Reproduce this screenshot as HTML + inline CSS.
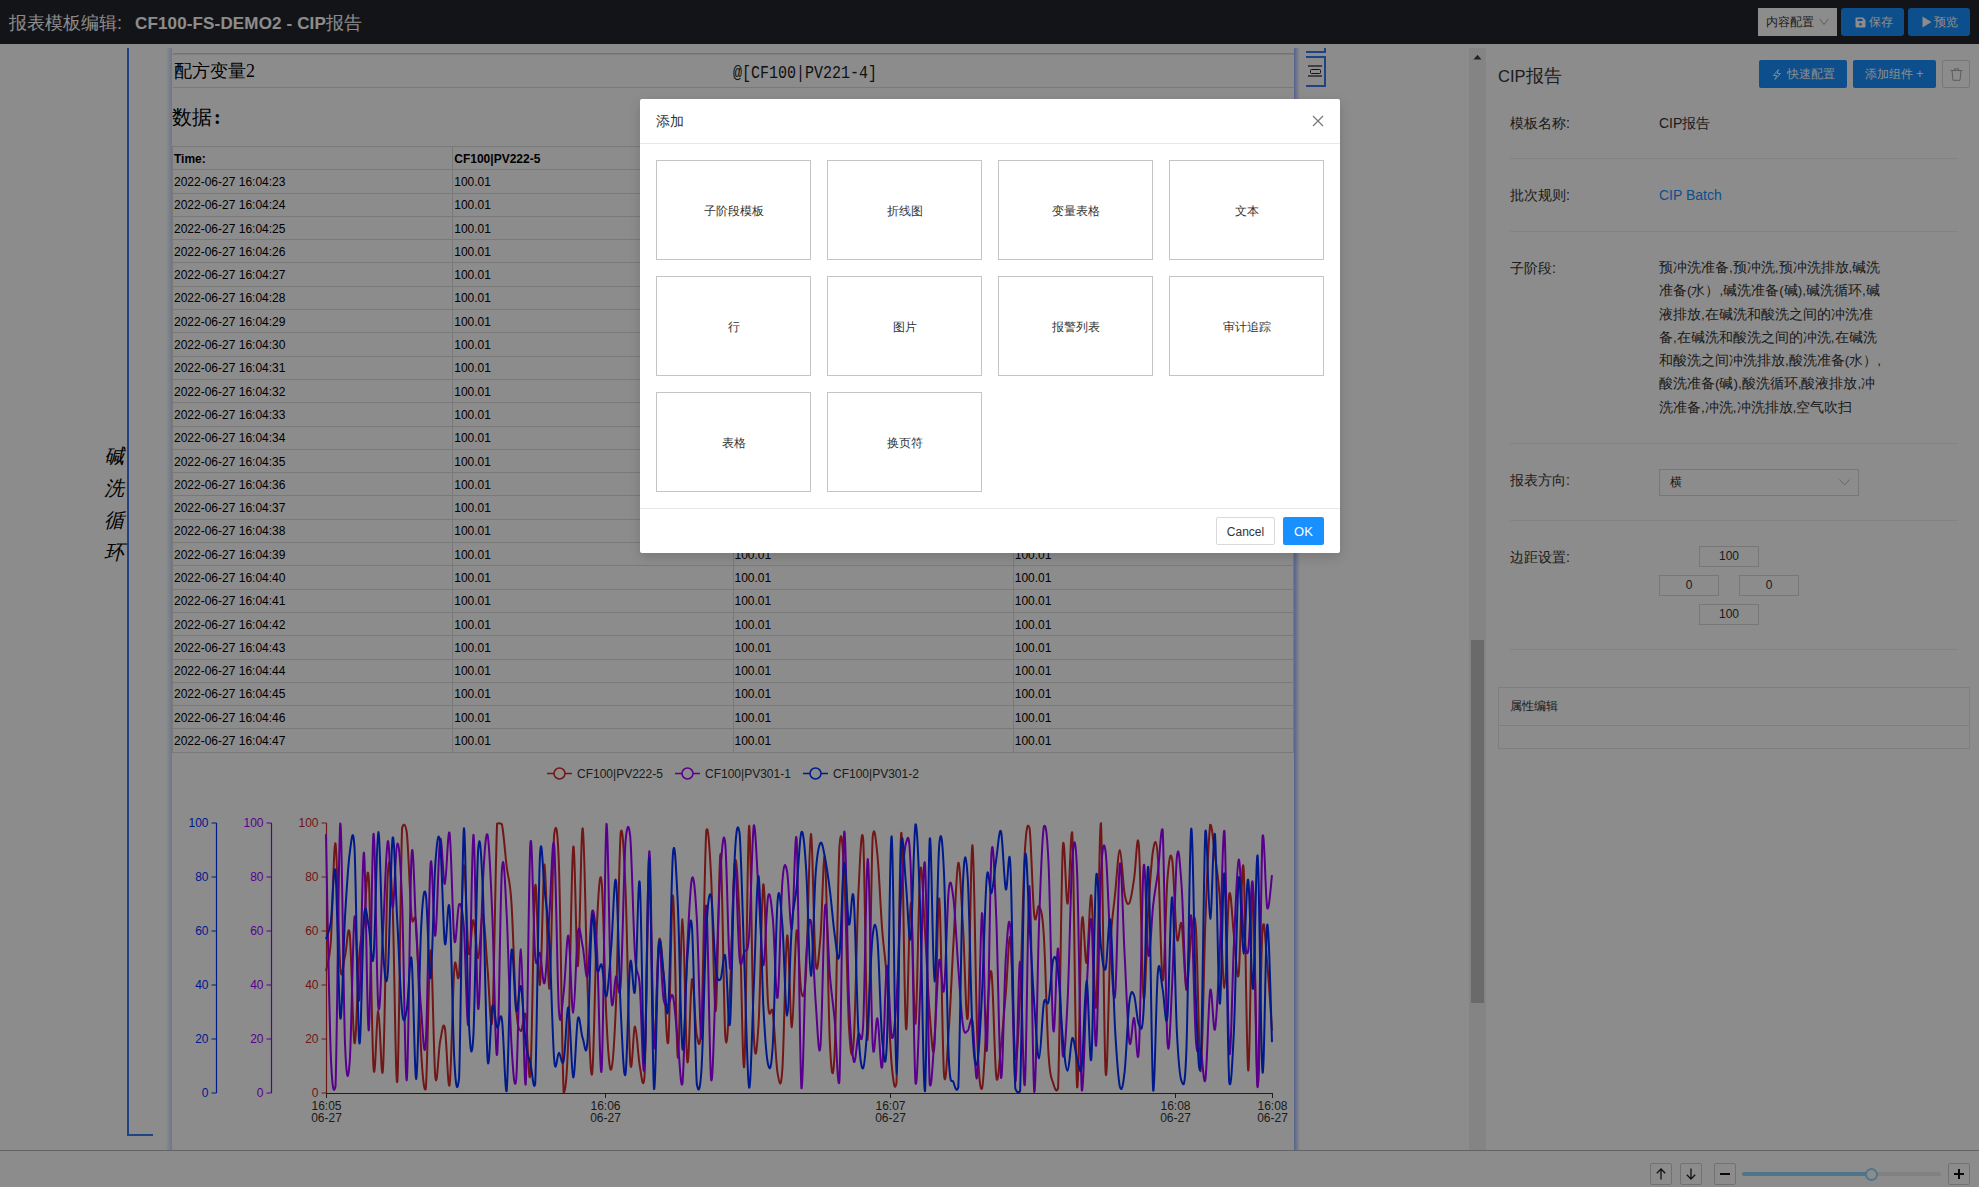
<!DOCTYPE html>
<html><head><meta charset="utf-8"><style>
*{box-sizing:border-box;margin:0;padding:0}
html,body{width:1979px;height:1187px;overflow:hidden;background:#fff;font-family:"Liberation Sans",sans-serif;color:#333;position:relative}
.abs{position:absolute}
#hdr{position:absolute;left:0;top:0;width:1979px;height:44px;background:#23252c}
#title{position:absolute;left:9px;top:11px;font-size:18px;color:#fff;white-space:nowrap;line-height:24px}
.hbtn{position:absolute;top:8px;height:28px;font-size:13px;line-height:28px;white-space:nowrap}
#vscroll{position:absolute;left:1469px;top:48px;width:17px;height:1102px;background:#f1f1f1}
#thumb{position:absolute;left:2px;top:592px;width:13px;height:363px;background:#c1c1c1}
#bot{position:absolute;left:0;top:1150px;width:1979px;height:37px;background:#fff;border-top:1px solid #b4b4b4}
#mask{position:absolute;left:0;top:0;width:1979px;height:1187px;background:rgba(0,0,0,0.45)}
#modal{position:absolute;left:640px;top:99px;width:700px;height:454px;background:#fff;border-radius:2px;box-shadow:0 4px 12px rgba(0,0,0,0.15)}
table.dt{position:absolute;left:172px;top:146px;width:1122px;border-collapse:collapse;table-layout:fixed;font-size:12px;color:#000}
table.dt td{border:1px solid #dcdcdc;height:23.3px;padding:1px 1px 0 1px;white-space:nowrap;line-height:20px}
.serif{font-family:"Liberation Serif",serif}
.lbl{position:absolute;left:1510px;font-size:14px;color:#333;line-height:20px}
.val{position:absolute;left:1659px;font-size:14px;color:#333;line-height:20px}
.hr{position:absolute;left:1510px;width:448px;height:1px;background:#eeeeee}
.inp{position:absolute;width:60px;height:21px;border:1px solid #d9d9d9;font-size:12px;text-align:center;line-height:19px;color:#333}
.card{position:absolute;width:155px;height:100px;border:1px solid #c4c4c4;font-size:12px;color:#333;text-align:center;line-height:100px}
.sq{position:absolute;top:1163px;width:22px;height:22px;border:1px solid #d0d0d0;border-radius:2px;background:#fff}
.pbtn{position:absolute;top:60px;height:28px;font-size:12px;line-height:28px;color:#fff;background:#1890ff;text-align:center;white-space:nowrap;border-radius:2px}
</style></head>
<body>
<!-- canvas -->
<div class="abs" style="left:127px;top:48px;width:2px;height:1088px;background:#377cf5"></div>
<div class="abs" style="left:127px;top:1134px;width:26px;height:2px;background:#377cf5"></div>
<div class="abs serif" style="left:104px;top:440px;width:24px;font-size:20px;line-height:32px;font-style:italic;color:#000">碱<br>洗<br>循<br>环</div>
<div class="abs" style="left:166px;top:48px;width:6px;height:1102px;background:linear-gradient(to right,rgba(200,215,245,0),#c8d7f5)"></div>
<div class="abs" style="left:1294px;top:48px;width:6px;height:1102px;background:linear-gradient(to right,#9bb6ff,rgba(155,182,255,0))"></div>
<div class="abs" style="left:173px;top:53px;width:1121px;height:1px;background:#d4d4d4"></div>
<div class="abs" style="left:173px;top:54px;width:1121px;height:1px;background:#e4e4e4"></div>
<div class="abs" style="left:173px;top:87px;width:1121px;height:1px;background:#dcdcdc"></div>
<div class="abs serif" style="left:174px;top:59px;font-size:18px;line-height:24px;color:#000">配方变量2</div>
<div class="abs" style="left:733px;top:60px;font-family:'Liberation Mono',monospace;font-size:15px;line-height:24px;color:#222;transform:scaleY(1.22);transform-origin:0 0">@[CF100|PV221-4]</div>
<div class="abs serif" style="left:172px;top:103px;font-size:20px;line-height:28px;color:#000">数据<b style="margin-left:2px">:</b></div>
<table class="dt">
<tr style="font-weight:bold"><td>Time:</td><td>CF100|PV222-5</td><td>CF100|PV301-1</td><td>CF100|PV301-2</td></tr>
<tr><td>2022-06-27 16:04:23</td><td>100.01</td><td>100.01</td><td>100.01</td></tr>
<tr><td>2022-06-27 16:04:24</td><td>100.01</td><td>100.01</td><td>100.01</td></tr>
<tr><td>2022-06-27 16:04:25</td><td>100.01</td><td>100.01</td><td>100.01</td></tr>
<tr><td>2022-06-27 16:04:26</td><td>100.01</td><td>100.01</td><td>100.01</td></tr>
<tr><td>2022-06-27 16:04:27</td><td>100.01</td><td>100.01</td><td>100.01</td></tr>
<tr><td>2022-06-27 16:04:28</td><td>100.01</td><td>100.01</td><td>100.01</td></tr>
<tr><td>2022-06-27 16:04:29</td><td>100.01</td><td>100.01</td><td>100.01</td></tr>
<tr><td>2022-06-27 16:04:30</td><td>100.01</td><td>100.01</td><td>100.01</td></tr>
<tr><td>2022-06-27 16:04:31</td><td>100.01</td><td>100.01</td><td>100.01</td></tr>
<tr><td>2022-06-27 16:04:32</td><td>100.01</td><td>100.01</td><td>100.01</td></tr>
<tr><td>2022-06-27 16:04:33</td><td>100.01</td><td>100.01</td><td>100.01</td></tr>
<tr><td>2022-06-27 16:04:34</td><td>100.01</td><td>100.01</td><td>100.01</td></tr>
<tr><td>2022-06-27 16:04:35</td><td>100.01</td><td>100.01</td><td>100.01</td></tr>
<tr><td>2022-06-27 16:04:36</td><td>100.01</td><td>100.01</td><td>100.01</td></tr>
<tr><td>2022-06-27 16:04:37</td><td>100.01</td><td>100.01</td><td>100.01</td></tr>
<tr><td>2022-06-27 16:04:38</td><td>100.01</td><td>100.01</td><td>100.01</td></tr>
<tr><td>2022-06-27 16:04:39</td><td>100.01</td><td>100.01</td><td>100.01</td></tr>
<tr><td>2022-06-27 16:04:40</td><td>100.01</td><td>100.01</td><td>100.01</td></tr>
<tr><td>2022-06-27 16:04:41</td><td>100.01</td><td>100.01</td><td>100.01</td></tr>
<tr><td>2022-06-27 16:04:42</td><td>100.01</td><td>100.01</td><td>100.01</td></tr>
<tr><td>2022-06-27 16:04:43</td><td>100.01</td><td>100.01</td><td>100.01</td></tr>
<tr><td>2022-06-27 16:04:44</td><td>100.01</td><td>100.01</td><td>100.01</td></tr>
<tr><td>2022-06-27 16:04:45</td><td>100.01</td><td>100.01</td><td>100.01</td></tr>
<tr><td>2022-06-27 16:04:46</td><td>100.01</td><td>100.01</td><td>100.01</td></tr>
<tr><td>2022-06-27 16:04:47</td><td>100.01</td><td>100.01</td><td>100.01</td></tr>
</table>
<svg class="abs" style="left:0;top:0" width="1979" height="1187" font-family="Liberation Sans" font-size="12"><line x1="216.5" y1="823" x2="216.5" y2="1093" stroke="#0030ff" stroke-width="1.2"/><line x1="211.5" y1="1093" x2="216.5" y2="1093" stroke="#0030ff" stroke-width="1"/><text x="208.5" y="1097" fill="#0030ff" text-anchor="end">0</text><line x1="211.5" y1="1039" x2="216.5" y2="1039" stroke="#0030ff" stroke-width="1"/><text x="208.5" y="1043" fill="#0030ff" text-anchor="end">20</text><line x1="211.5" y1="985" x2="216.5" y2="985" stroke="#0030ff" stroke-width="1"/><text x="208.5" y="989" fill="#0030ff" text-anchor="end">40</text><line x1="211.5" y1="931" x2="216.5" y2="931" stroke="#0030ff" stroke-width="1"/><text x="208.5" y="935" fill="#0030ff" text-anchor="end">60</text><line x1="211.5" y1="877" x2="216.5" y2="877" stroke="#0030ff" stroke-width="1"/><text x="208.5" y="881" fill="#0030ff" text-anchor="end">80</text><line x1="211.5" y1="823" x2="216.5" y2="823" stroke="#0030ff" stroke-width="1"/><text x="208.5" y="827" fill="#0030ff" text-anchor="end">100</text><line x1="271.5" y1="823" x2="271.5" y2="1093" stroke="#a000ff" stroke-width="1.2"/><line x1="266.5" y1="1093" x2="271.5" y2="1093" stroke="#a000ff" stroke-width="1"/><text x="263.5" y="1097" fill="#a000ff" text-anchor="end">0</text><line x1="266.5" y1="1039" x2="271.5" y2="1039" stroke="#a000ff" stroke-width="1"/><text x="263.5" y="1043" fill="#a000ff" text-anchor="end">20</text><line x1="266.5" y1="985" x2="271.5" y2="985" stroke="#a000ff" stroke-width="1"/><text x="263.5" y="989" fill="#a000ff" text-anchor="end">40</text><line x1="266.5" y1="931" x2="271.5" y2="931" stroke="#a000ff" stroke-width="1"/><text x="263.5" y="935" fill="#a000ff" text-anchor="end">60</text><line x1="266.5" y1="877" x2="271.5" y2="877" stroke="#a000ff" stroke-width="1"/><text x="263.5" y="881" fill="#a000ff" text-anchor="end">80</text><line x1="266.5" y1="823" x2="271.5" y2="823" stroke="#a000ff" stroke-width="1"/><text x="263.5" y="827" fill="#a000ff" text-anchor="end">100</text><line x1="326.5" y1="823" x2="326.5" y2="1093" stroke="#cf2a2a" stroke-width="1.2"/><line x1="321.5" y1="1093" x2="326.5" y2="1093" stroke="#cf2a2a" stroke-width="1"/><text x="318.5" y="1097" fill="#cf2a2a" text-anchor="end">0</text><line x1="321.5" y1="1039" x2="326.5" y2="1039" stroke="#cf2a2a" stroke-width="1"/><text x="318.5" y="1043" fill="#cf2a2a" text-anchor="end">20</text><line x1="321.5" y1="985" x2="326.5" y2="985" stroke="#cf2a2a" stroke-width="1"/><text x="318.5" y="989" fill="#cf2a2a" text-anchor="end">40</text><line x1="321.5" y1="931" x2="326.5" y2="931" stroke="#cf2a2a" stroke-width="1"/><text x="318.5" y="935" fill="#cf2a2a" text-anchor="end">60</text><line x1="321.5" y1="877" x2="326.5" y2="877" stroke="#cf2a2a" stroke-width="1"/><text x="318.5" y="881" fill="#cf2a2a" text-anchor="end">80</text><line x1="321.5" y1="823" x2="326.5" y2="823" stroke="#cf2a2a" stroke-width="1"/><text x="318.5" y="827" fill="#cf2a2a" text-anchor="end">100</text><path d="M326.0 970.9C326.8 965.8 329.1 964.2 330.8 941.9C332.4 919.6 333.8 839.0 335.5 843.5C337.2 847.9 338.6 947.6 340.3 967.3C341.9 986.9 343.4 961.6 345.0 955.9C346.7 950.1 348.1 919.1 349.8 934.4C351.4 949.7 352.9 1039.6 354.5 1043.1C356.2 1046.7 357.6 975.8 359.3 954.8C360.9 933.7 362.4 936.2 364.0 922.9C365.7 909.7 367.1 853.6 368.8 878.9C370.4 904.2 371.9 1044.5 373.5 1067.6C375.2 1090.7 376.6 1010.9 378.3 1011.1C380.0 1011.2 381.4 1092.4 383.0 1068.5C384.7 1044.6 386.1 902.9 387.8 874.4C389.5 845.9 390.9 869.5 392.6 905.8C394.2 942.0 395.6 1093.0 397.3 1081.7C399.0 1068.0 400.4 871.4 402.1 827.8C403.7 823.0 405.2 823.0 406.8 832.5C408.5 848.0 409.9 899.9 411.6 916.4C413.2 932.9 414.7 903.3 416.3 926.8C418.0 950.3 419.4 1022.1 421.1 1050.5C422.7 1078.9 424.2 1093.0 425.8 1088.9C427.5 1071.4 428.9 952.4 430.6 950.3C432.2 948.2 433.7 1060.9 435.3 1076.9C437.0 1092.9 438.4 1050.3 440.1 1041.6C441.8 1033.0 443.2 1020.1 444.8 1027.7C446.5 1035.2 447.9 1093.0 449.6 1084.9C451.3 1074.4 452.7 987.1 454.4 967.7C456.0 948.3 457.4 991.9 459.1 974.1C460.8 956.2 462.2 869.3 463.9 865.5C465.5 861.8 466.9 943.3 468.6 952.8C470.3 962.4 471.7 919.2 473.4 920.1C475.0 921.0 476.5 959.1 478.1 958.1C479.8 957.0 481.2 912.1 482.9 914.1C484.5 916.1 486.0 951.4 487.6 969.5C489.3 987.7 490.7 1043.4 492.4 1017.9C494.0 992.4 495.5 857.5 497.1 823.6C498.8 823.0 500.2 823.0 501.9 824.2C503.6 831.6 505.0 852.5 506.6 866.1C508.3 879.7 509.7 877.1 511.4 901.9C513.1 926.7 514.5 985.3 516.2 1007.9C517.8 1030.5 519.2 1029.8 520.9 1031.0C522.6 1032.2 524.0 1007.4 525.7 1015.0C527.3 1022.5 528.7 1093.0 530.4 1074.0C532.1 1051.5 533.5 901.7 535.2 886.1C536.8 870.5 538.3 988.7 539.9 984.9C541.6 981.1 543.0 863.8 544.7 864.4C546.3 865.1 547.8 993.9 549.4 988.6C551.1 983.4 552.5 856.1 554.2 834.3C555.8 823.0 557.3 823.0 558.9 864.2C560.6 909.5 562.0 1062.7 563.7 1092.9C565.4 1093.0 566.8 1079.4 568.4 1036.4C570.1 993.4 571.5 859.5 573.2 847.2C574.9 834.9 576.3 969.4 577.9 966.1C579.6 962.8 581.0 824.9 582.7 828.3C584.4 831.7 585.8 942.8 587.5 985.7C589.1 1028.6 590.5 1084.2 592.2 1073.3C593.9 1062.3 595.3 956.4 597.0 923.0C598.6 889.7 600.1 865.8 601.7 882.8C603.4 899.8 604.8 987.5 606.5 1020.2C608.1 1052.8 609.6 1072.4 611.2 1069.5C612.9 1066.5 614.3 1044.6 616.0 1003.2C617.6 961.8 619.1 852.8 620.7 832.7C622.4 823.0 623.8 848.4 625.5 888.3C627.2 928.3 628.6 1037.0 630.2 1061.1C631.9 1085.3 633.3 1025.7 635.0 1026.5C636.7 1027.3 638.1 1056.9 639.7 1065.7C641.4 1074.5 642.8 1093.0 644.5 1076.8C646.2 1043.9 647.6 883.4 649.3 877.8C650.9 872.2 652.3 1033.8 654.0 1045.0C655.7 1056.3 657.1 954.7 658.8 942.0C660.4 929.2 661.9 954.8 663.5 972.2C665.2 989.6 666.6 1055.0 668.3 1041.5C669.9 1028.1 671.4 892.6 673.0 895.4C674.7 898.2 676.1 1053.5 677.8 1057.6C679.4 1061.8 680.9 918.5 682.5 919.2C684.2 919.9 685.6 1051.0 687.3 1061.5C689.0 1072.1 690.4 983.9 692.0 979.4C693.7 974.8 695.1 1028.4 696.8 1035.5C698.5 1042.7 699.9 1056.0 701.5 1020.2C703.2 984.3 704.6 856.1 706.3 830.8C708.0 823.0 709.4 844.6 711.1 876.1C712.7 907.6 714.1 1014.7 715.8 1010.9C717.5 1007.0 718.9 849.7 720.6 854.1C722.2 858.5 723.7 1012.9 725.3 1036.1C727.0 1059.3 728.4 1017.0 730.1 986.5C731.7 956.1 733.2 874.0 734.8 862.3C736.5 850.6 737.9 884.1 739.6 919.7C741.2 955.3 742.7 1082.3 744.3 1065.9C746.0 1049.5 747.4 831.2 749.1 825.9C750.7 823.0 752.2 1000.9 753.8 1035.4C755.5 1070.0 756.9 1049.7 758.6 1023.3C760.3 996.8 761.7 887.7 763.3 884.4C765.0 881.0 766.4 981.7 768.1 1004.2C769.8 1026.7 771.2 1000.9 772.9 1013.0C774.5 1025.1 775.9 1063.4 777.6 1073.2C779.3 1082.9 780.7 1092.7 782.4 1068.7C784.0 1044.6 785.5 942.9 787.1 935.7C788.8 928.4 790.2 1028.3 791.9 1027.4C793.5 1026.5 795.0 936.7 796.6 930.7C798.3 924.6 799.7 985.6 801.4 992.6C803.0 999.6 804.5 998.4 806.1 970.6C807.8 942.9 809.2 835.5 810.9 834.0C812.5 832.6 814.0 944.2 815.6 962.4C817.3 980.6 818.7 956.0 820.4 937.9C822.1 919.8 823.5 840.5 825.1 859.0C826.8 877.5 828.2 1010.0 829.9 1043.6C831.6 1077.3 833.0 1085.7 834.7 1051.4C836.3 1017.1 837.7 879.1 839.4 847.7C841.1 823.0 842.5 841.1 844.2 872.2C845.8 903.3 847.3 996.0 848.9 1025.6C850.6 1055.3 852.0 1064.9 853.7 1041.8C855.3 1018.6 856.8 928.8 858.4 893.4C860.1 857.9 861.5 823.0 863.2 839.1C864.8 864.7 866.3 1040.4 867.9 1039.9C869.6 1039.5 871.0 868.9 872.7 836.5C874.3 823.0 875.8 838.4 877.4 854.8C879.1 871.2 880.5 908.3 882.2 930.0C883.9 951.8 885.3 955.6 886.9 979.2C888.6 1002.8 890.0 1046.9 891.7 1065.0C893.4 1083.0 894.8 1093.0 896.5 1082.6C898.1 1042.0 899.5 842.5 901.2 833.1C902.9 823.6 904.3 1016.4 906.0 1028.6C907.6 1040.8 909.0 903.6 910.7 902.8C912.4 901.9 913.8 1029.2 915.5 1023.6C917.1 1018.0 918.6 886.6 920.2 870.6C921.9 854.6 923.3 906.9 925.0 932.0C926.6 957.0 928.1 993.9 929.7 1013.8C931.4 1033.7 932.8 1065.8 934.5 1045.6C936.1 1025.5 937.6 893.5 939.2 898.5C940.9 903.5 942.3 1051.2 944.0 1074.4C945.7 1093.0 947.1 1054.5 948.7 1031.3C950.4 1008.2 951.8 971.5 953.5 942.0C955.2 912.5 956.6 865.4 958.3 862.9C959.9 860.3 961.3 900.1 963.0 927.1C964.7 954.2 966.1 1031.7 967.8 1017.3C969.4 1003.0 970.8 841.7 972.5 845.3C974.2 848.9 975.6 995.4 977.3 1037.9C978.9 1080.5 980.4 1091.6 982.0 1088.5C983.7 1085.4 985.1 1040.6 986.8 1020.3C988.4 1000.0 989.9 962.8 991.5 972.7C993.2 982.5 994.6 1063.9 996.3 1076.7C997.9 1089.4 999.4 1060.0 1001.0 1045.4C1002.7 1030.8 1004.1 1012.1 1005.8 993.4C1007.5 974.7 1008.9 927.3 1010.5 938.5C1012.2 949.7 1013.6 1047.6 1015.3 1057.5C1017.0 1067.4 1018.4 1031.1 1020.1 995.2C1021.7 959.3 1023.1 881.7 1024.8 852.4C1026.5 823.2 1027.9 823.0 1029.6 828.3C1031.2 839.3 1032.6 902.0 1034.3 915.6C1036.0 929.3 1037.4 902.9 1039.1 906.4C1040.7 909.8 1042.2 909.2 1043.8 935.2C1045.5 961.2 1046.9 1029.1 1048.6 1055.1C1050.2 1081.1 1051.7 1077.7 1053.3 1083.5C1055.0 1089.3 1056.4 1093.0 1058.1 1088.2C1059.7 1046.8 1061.2 879.5 1062.8 847.2C1064.5 823.0 1065.9 906.2 1067.6 903.7C1069.3 901.3 1070.7 823.0 1072.3 833.1C1074.0 865.2 1075.4 1071.8 1077.1 1087.3C1078.8 1093.0 1080.2 943.0 1081.8 921.2C1083.5 899.4 1084.9 967.3 1086.6 962.8C1088.3 958.3 1089.7 888.0 1091.4 895.8C1093.0 903.5 1094.4 1019.6 1096.1 1006.9C1097.8 994.2 1099.2 823.0 1100.9 823.2C1102.5 834.7 1104.0 1051.3 1105.6 1072.7C1107.3 1093.0 1108.7 976.8 1110.4 945.6C1112.0 914.3 1113.5 910.7 1115.1 894.0C1116.8 877.3 1118.2 850.0 1119.9 849.9C1121.5 849.9 1123.0 884.7 1124.6 894.0C1126.3 903.3 1127.7 905.7 1129.4 903.0C1131.1 900.3 1132.5 888.8 1134.1 878.8C1135.8 868.8 1137.2 825.1 1138.9 845.9C1140.6 866.8 1142.0 987.1 1143.6 998.0C1145.3 1008.9 1146.7 934.0 1148.4 908.0C1150.1 882.1 1151.5 858.6 1153.2 849.8C1154.8 841.0 1156.2 834.9 1157.9 857.8C1159.6 880.7 1161.0 976.6 1162.7 980.4C1164.3 984.2 1165.8 900.6 1167.4 879.6C1169.1 858.5 1170.5 849.6 1172.2 859.9C1173.8 870.1 1175.3 927.1 1176.9 938.3C1178.6 949.6 1180.0 915.3 1181.7 924.3C1183.3 933.3 1184.8 987.8 1186.4 989.8C1188.1 991.8 1189.5 946.4 1191.2 935.7C1192.8 925.0 1194.3 904.9 1195.9 928.6C1197.6 952.3 1199.0 1072.8 1200.7 1071.3C1202.4 1069.9 1203.8 963.5 1205.4 920.4C1207.1 877.2 1208.5 836.2 1210.2 824.8C1211.9 823.0 1213.3 842.9 1215.0 855.5C1216.6 868.0 1218.0 873.2 1219.7 896.4C1221.4 919.6 1222.8 988.4 1224.5 988.1C1226.1 987.8 1227.6 903.6 1229.2 894.5C1230.9 885.4 1232.3 922.2 1234.0 936.1C1235.6 950.1 1237.1 986.2 1238.7 974.1C1240.4 961.9 1241.8 849.8 1243.5 866.6C1245.1 883.5 1246.6 1066.2 1248.2 1070.4C1249.9 1074.5 1251.3 887.9 1253.0 890.4C1254.6 893.0 1256.1 1077.9 1257.7 1085.0C1259.4 1092.0 1260.8 952.0 1262.5 930.7C1264.2 909.3 1265.6 945.6 1267.2 963.1C1268.9 980.7 1271.2 1019.0 1272.0 1030.8" fill="none" stroke="#cf2a2a" stroke-width="2"/><path d="M326.0 834.3C326.8 872.9 329.1 1010.9 330.8 1055.1C332.4 1093.0 333.8 1093.0 335.5 1086.6C337.2 1046.1 338.6 831.0 340.3 823.4C341.9 823.0 343.4 1001.8 345.0 1043.3C346.7 1084.7 348.1 1082.5 349.8 1060.4C351.4 1038.4 352.9 927.8 354.5 917.1C356.2 906.5 357.6 1010.9 359.3 999.7C360.9 988.4 362.4 847.4 364.0 852.8C365.7 858.2 367.1 1033.7 368.8 1030.4C370.4 1027.1 371.9 838.1 373.5 833.9C375.2 829.8 376.6 989.8 378.3 1006.7C380.0 1023.7 381.4 959.6 383.0 930.7C384.7 901.7 386.1 845.3 387.8 841.3C389.5 837.4 390.9 907.6 392.6 908.0C394.2 908.4 395.6 844.6 397.3 843.6C399.0 842.5 400.4 860.4 402.1 901.8C403.7 943.2 405.2 1088.1 406.8 1079.9C408.5 1071.7 409.9 880.6 411.6 855.0C413.2 829.5 414.7 906.9 416.3 933.8C418.0 960.8 419.4 990.2 421.1 1009.1C422.7 1028.0 424.2 1067.1 425.8 1041.7C427.5 1016.2 428.9 882.1 430.6 863.6C432.2 845.0 433.7 939.8 435.3 935.6C437.0 931.5 438.4 848.8 440.1 839.7C441.8 830.7 443.2 885.1 444.8 884.0C446.5 882.9 447.9 823.7 449.6 833.5C451.3 843.3 452.7 927.7 454.4 940.1C456.0 952.5 457.4 906.6 459.1 904.4C460.8 902.3 462.2 906.9 463.9 927.7C465.5 948.5 466.9 1039.5 468.6 1023.2C470.3 1007.0 471.7 837.2 473.4 834.7C475.0 832.1 476.5 1000.3 478.1 1008.6C479.8 1016.9 481.2 912.4 482.9 882.1C484.5 851.8 486.0 829.1 487.6 835.2C489.3 841.4 490.7 878.9 492.4 917.3C494.0 955.6 495.5 1062.8 497.1 1054.6C498.8 1046.4 500.2 895.0 501.9 870.2C503.6 845.4 505.0 882.5 506.6 912.8C508.3 943.0 509.7 1013.8 511.4 1043.0C513.1 1072.3 514.5 1093.0 516.2 1079.7C517.8 1063.4 519.2 948.6 520.9 949.4C522.6 950.2 524.0 1093.0 525.7 1084.3C527.3 1065.7 528.7 865.6 530.4 843.2C532.1 823.0 533.5 937.0 535.2 956.3C536.8 975.6 538.3 948.8 539.9 953.3C541.6 957.9 543.0 989.2 544.7 982.5C546.3 975.7 547.8 938.5 549.4 914.5C551.1 890.6 552.5 828.8 554.2 845.6C555.8 862.3 557.3 984.4 558.9 1010.0C560.6 1035.7 562.0 1005.1 563.7 992.1C565.4 979.1 566.8 932.1 568.4 935.7C570.1 939.3 571.5 1013.3 573.2 1012.7C574.9 1012.1 576.3 943.8 577.9 932.2C579.6 920.6 581.0 938.7 582.7 946.4C584.4 954.0 585.8 982.1 587.5 976.0C589.1 969.8 590.5 915.7 592.2 911.2C593.9 906.7 595.3 922.7 597.0 950.4C598.6 978.0 600.1 1091.3 601.7 1069.2C603.4 1047.1 604.8 836.6 606.5 823.9C608.1 823.0 609.6 970.3 611.2 997.0C612.9 1023.6 614.3 978.7 616.0 976.4C617.6 974.2 619.1 1007.8 620.7 984.2C622.4 960.7 623.8 868.0 625.5 842.0C627.2 823.0 628.6 823.0 630.2 835.9C631.9 855.6 633.3 928.7 635.0 954.8C636.7 980.8 638.1 965.2 639.7 984.8C641.4 1004.5 642.8 1090.3 644.5 1066.9C646.2 1043.5 647.6 854.8 649.3 851.2C650.9 847.7 652.3 1030.2 654.0 1046.7C655.7 1063.2 657.1 953.8 658.8 945.4C660.4 937.0 661.9 988.4 663.5 998.7C665.2 1009.0 666.6 1004.7 668.3 1004.4C669.9 1004.0 671.4 990.1 673.0 996.6C674.7 1003.0 676.1 1026.2 677.8 1041.4C679.4 1056.5 680.9 1093.0 682.5 1083.0C684.2 1066.8 685.6 984.3 687.3 948.4C689.0 912.6 690.4 883.4 692.0 878.1C693.7 872.8 695.1 890.2 696.8 918.3C698.5 946.4 699.9 1040.8 701.5 1038.6C703.2 1036.4 704.6 898.7 706.3 905.7C708.0 912.8 709.4 1065.6 711.1 1078.9C712.7 1092.3 714.1 1018.8 715.8 982.1C717.5 945.4 718.9 893.5 720.6 869.4C722.2 845.3 723.7 827.0 725.3 844.3C727.0 861.7 728.4 965.1 730.1 968.6C731.7 972.2 733.2 866.2 734.8 864.4C736.5 862.6 737.9 943.2 739.6 958.4C741.2 973.6 742.7 955.6 744.3 951.5C746.0 947.5 747.4 957.3 749.1 935.2C750.7 913.1 752.2 832.9 753.8 825.4C755.5 823.0 756.9 867.7 758.6 892.2C760.3 916.7 761.7 964.5 763.3 965.3C765.0 966.1 766.4 904.7 768.1 896.6C769.8 888.6 771.2 901.7 772.9 919.3C774.5 937.0 775.9 1004.1 777.6 997.5C779.3 990.8 780.7 903.3 782.4 881.3C784.0 859.3 785.5 863.4 787.1 871.7C788.8 880.0 790.2 934.5 791.9 928.7C793.5 922.9 795.0 823.0 796.6 838.5C798.3 866.4 799.7 1067.2 801.4 1088.1C803.0 1093.0 804.5 987.1 806.1 958.0C807.8 928.9 809.2 914.1 810.9 921.7C812.5 929.2 814.0 979.2 815.6 1001.0C817.3 1022.9 818.7 1063.3 820.4 1046.7C822.1 1030.1 823.5 918.6 825.1 906.1C826.8 893.7 828.2 955.7 829.9 975.7C831.6 995.7 833.0 1001.8 834.7 1020.4C836.3 1038.9 837.7 1093.0 839.4 1081.7C841.1 1048.7 842.5 846.5 844.2 831.9C845.8 823.0 847.3 957.8 848.9 997.9C850.6 1038.0 852.0 1054.7 853.7 1061.1C855.3 1067.5 856.8 1041.1 858.4 1034.6C860.1 1028.1 861.5 1054.9 863.2 1024.2C864.8 993.5 866.3 855.6 867.9 859.1C869.6 862.6 871.0 1016.4 872.7 1044.2C874.3 1072.1 875.8 1014.4 877.4 1018.4C879.1 1022.3 880.5 1075.9 882.2 1066.7C883.9 1057.6 885.3 971.3 886.9 966.1C888.6 960.9 890.0 1031.0 891.7 1036.9C893.4 1042.9 894.8 1025.0 896.5 1000.1C898.1 975.2 899.5 922.0 901.2 894.6C902.9 867.1 904.3 847.9 906.0 843.2C907.6 838.5 909.0 825.9 910.7 867.8C912.4 909.7 913.8 1061.1 915.5 1082.7C917.1 1093.0 918.6 1029.3 920.2 991.0C921.9 952.7 923.3 847.5 925.0 863.8C926.6 880.1 928.1 1053.6 929.7 1084.1C931.4 1093.0 932.8 1059.7 934.5 1038.1C936.1 1016.5 937.6 969.2 939.2 960.7C940.9 952.2 942.3 1002.0 944.0 989.7C945.7 977.4 947.1 906.3 948.7 890.4C950.4 874.6 951.8 885.6 953.5 899.1C955.2 912.6 956.6 945.4 958.3 967.6C959.9 989.8 961.3 1014.7 963.0 1025.8C964.7 1036.8 966.1 1031.5 967.8 1030.7C969.4 1029.9 970.8 1013.3 972.5 1021.1C974.2 1028.9 975.6 1093.0 977.3 1075.4C978.9 1056.5 980.4 917.6 982.0 913.2C983.7 908.9 985.1 1061.0 986.8 1050.4C988.4 1039.8 989.9 875.9 991.5 852.9C993.2 829.8 994.6 879.3 996.3 918.6C997.9 957.9 999.4 1070.7 1001.0 1077.7C1002.7 1084.6 1004.1 984.2 1005.8 958.3C1007.5 932.5 1008.9 908.4 1010.5 930.0C1012.2 951.6 1013.6 1076.1 1015.3 1081.6C1017.0 1087.1 1018.4 961.0 1020.1 961.6C1021.7 962.2 1023.1 1093.0 1024.8 1084.9C1026.5 1071.7 1027.9 884.9 1029.6 886.1C1031.2 887.3 1032.6 1085.6 1034.3 1091.9C1036.0 1093.0 1037.4 968.7 1039.1 922.4C1040.7 876.0 1042.2 837.0 1043.8 826.9C1045.5 823.0 1046.9 828.9 1048.6 864.5C1050.2 900.0 1051.7 1015.3 1053.3 1030.0C1055.0 1044.7 1056.4 944.3 1058.1 948.7C1059.7 953.1 1061.2 1046.2 1062.8 1055.2C1064.5 1064.3 1065.9 1034.8 1067.6 1000.6C1069.3 966.4 1070.7 882.2 1072.3 859.8C1074.0 837.3 1075.4 831.8 1077.1 872.2C1078.8 912.6 1080.2 1069.9 1081.8 1090.5C1083.5 1093.0 1084.9 1020.3 1086.6 990.4C1088.3 960.6 1089.7 910.5 1091.4 920.1C1093.0 929.8 1094.4 1053.3 1096.1 1045.6C1097.8 1037.9 1099.2 910.2 1100.9 876.3C1102.5 842.4 1104.0 840.0 1105.6 851.9C1107.3 863.7 1108.7 919.0 1110.4 944.1C1112.0 969.2 1113.5 1009.3 1115.1 995.2C1116.8 981.2 1118.2 871.0 1119.9 863.9C1121.5 856.8 1123.0 923.3 1124.6 954.5C1126.3 985.7 1127.7 1031.0 1129.4 1042.1C1131.1 1053.3 1132.5 1016.6 1134.1 1018.0C1135.8 1019.4 1137.2 1076.5 1138.9 1050.0C1140.6 1023.5 1142.0 883.1 1143.6 866.5C1145.3 850.0 1146.7 948.6 1148.4 955.3C1150.1 962.0 1151.5 919.4 1153.2 904.9C1154.8 890.4 1156.2 885.4 1157.9 872.3C1159.6 859.2 1161.0 823.0 1162.7 830.1C1164.3 859.7 1165.8 1014.7 1167.4 1041.6C1169.1 1068.4 1170.5 1015.8 1172.2 983.5C1173.8 951.1 1175.3 873.8 1176.9 857.0C1178.6 840.1 1180.0 864.3 1181.7 887.3C1183.3 910.4 1184.8 983.6 1186.4 988.6C1188.1 993.6 1189.5 906.9 1191.2 915.9C1192.8 925.0 1194.3 1017.0 1195.9 1040.4C1197.6 1063.7 1199.0 1042.5 1200.7 1049.3C1202.4 1056.1 1203.8 1089.6 1205.4 1079.3C1207.1 1069.0 1208.5 999.2 1210.2 990.5C1211.9 981.7 1213.3 1035.8 1215.0 1029.3C1216.6 1022.8 1218.0 987.9 1219.7 953.2C1221.4 918.6 1222.8 823.0 1224.5 831.2C1226.1 848.5 1227.6 1032.3 1229.2 1051.7C1230.9 1071.2 1232.3 976.1 1234.0 942.4C1235.6 908.8 1237.1 861.5 1238.7 859.5C1240.4 857.6 1241.8 915.5 1243.5 931.4C1245.1 947.4 1246.6 958.7 1248.2 950.7C1249.9 942.7 1251.3 861.8 1253.0 885.7C1254.6 909.6 1256.1 1093.0 1257.7 1087.1C1259.4 1078.6 1260.8 868.3 1262.5 836.9C1264.2 823.0 1265.6 900.9 1267.2 907.7C1268.9 914.4 1271.2 880.9 1272.0 875.2" fill="none" stroke="#a000ff" stroke-width="2"/><path d="M326.0 939.0C326.8 936.1 329.1 934.0 330.8 922.3C332.4 910.6 333.8 855.6 335.5 872.4C337.2 889.2 338.6 1010.3 340.3 1018.1C341.9 1025.9 343.4 946.0 345.0 917.0C346.7 888.0 348.1 864.6 349.8 852.5C351.4 840.3 352.9 823.0 354.5 847.6C356.2 880.9 357.6 1030.5 359.3 1042.6C360.9 1054.8 362.4 937.4 364.0 917.0C365.7 896.7 367.1 919.4 368.8 926.4C370.4 933.4 371.9 973.6 373.5 957.1C375.2 940.6 376.6 833.3 378.3 832.1C380.0 831.0 381.4 925.8 383.0 950.4C384.7 975.0 386.1 992.4 387.8 972.8C389.5 953.2 390.9 847.2 392.6 838.2C394.2 829.2 395.6 891.0 397.3 921.4C399.0 951.7 400.4 996.2 402.1 1011.7C403.7 1027.1 405.2 1018.7 406.8 1009.5C408.5 1000.3 409.9 946.9 411.6 959.1C413.2 971.2 414.7 1084.1 416.3 1078.8C418.0 1073.5 419.4 961.2 421.1 929.0C422.7 896.7 424.2 885.7 425.8 894.3C427.5 902.9 428.9 983.2 430.6 977.9C432.2 972.7 433.7 888.1 435.3 864.4C437.0 840.7 438.4 828.7 440.1 842.4C441.8 856.2 443.2 931.3 444.8 943.0C446.5 954.6 447.9 888.3 449.6 909.0C451.3 929.7 452.7 1031.8 454.4 1061.3C456.0 1090.9 457.4 1093.0 459.1 1077.9C460.8 1037.1 462.2 839.2 463.9 828.4C465.5 823.0 466.9 980.0 468.6 1016.2C470.3 1052.4 471.7 1064.3 473.4 1035.4C475.0 1006.5 476.5 876.2 478.1 850.9C479.8 825.6 481.2 854.0 482.9 890.5C484.5 927.1 486.0 1039.5 487.6 1059.7C489.3 1080.0 490.7 1011.8 492.4 1006.1C494.0 1000.5 495.5 1025.2 497.1 1027.5C498.8 1029.8 500.2 1008.2 501.9 1019.4C503.6 1030.5 505.0 1093.0 506.6 1091.3C508.3 1079.4 509.7 965.4 511.4 951.3C513.1 937.3 514.5 1004.7 516.2 1010.8C517.8 1017.0 519.2 980.9 520.9 986.6C522.6 992.2 524.0 1029.5 525.7 1042.9C527.3 1056.4 528.7 1056.1 530.4 1063.3C532.1 1070.5 533.5 1093.0 535.2 1084.1C536.8 1048.1 538.3 891.1 539.9 857.4C541.6 823.6 543.0 876.4 544.7 891.2C546.3 906.0 547.8 912.4 549.4 941.9C551.1 971.4 552.5 1040.2 554.2 1059.6C555.8 1079.0 557.3 1052.6 558.9 1052.8C560.6 1053.0 562.0 1068.6 563.7 1060.7C565.4 1052.8 566.8 1004.6 568.4 1007.5C570.1 1010.5 571.5 1075.5 573.2 1077.4C574.9 1079.4 576.3 1025.5 577.9 1018.6C579.6 1011.8 581.0 1034.3 582.7 1038.2C584.4 1042.1 585.8 1062.2 587.5 1040.9C589.1 1019.6 590.5 929.0 592.2 916.5C593.9 904.0 595.3 960.9 597.0 969.4C598.6 977.9 600.1 960.4 601.7 965.2C603.4 969.9 604.8 999.4 606.5 996.3C608.1 993.2 609.6 967.6 611.2 947.5C612.9 927.3 614.3 870.1 616.0 881.0C617.6 891.9 619.1 976.1 620.7 1009.8C622.4 1043.6 623.8 1082.2 625.5 1074.0C627.2 1065.9 628.6 977.7 630.2 963.1C631.9 948.5 633.3 1004.8 635.0 990.6C636.7 976.5 638.1 869.6 639.7 882.3C641.4 894.9 642.8 1067.4 644.5 1063.0C646.2 1058.7 647.6 852.8 649.3 857.4C650.9 861.9 652.3 1073.4 654.0 1089.0C655.7 1093.0 657.1 966.9 658.8 946.6C660.4 926.3 661.9 962.5 663.5 973.2C665.2 983.9 666.6 1028.9 668.3 1007.9C669.9 986.8 671.4 871.3 673.0 853.0C674.7 834.7 676.1 869.1 677.8 903.4C679.4 937.7 680.9 1039.1 682.5 1048.9C684.2 1058.7 685.6 980.6 687.3 959.4C689.0 938.1 690.4 905.9 692.0 927.7C693.7 949.5 695.1 1059.2 696.8 1084.0C698.5 1093.0 699.9 1093.0 701.5 1069.4C703.2 1042.5 704.6 960.9 706.3 930.5C708.0 900.2 709.4 889.5 711.1 896.0C712.7 902.6 714.1 953.5 715.8 968.1C717.5 982.6 718.9 981.1 720.6 979.0C722.2 977.0 723.7 948.5 725.3 956.1C727.0 963.8 728.4 1040.1 730.1 1022.6C731.7 1005.2 733.2 889.5 734.8 856.3C736.5 823.2 737.9 823.0 739.6 833.3C741.2 852.0 742.7 918.4 744.3 962.9C746.0 1007.4 747.4 1083.4 749.1 1087.5C750.7 1091.5 752.2 1022.8 753.8 985.8C755.5 948.8 756.9 872.8 758.6 876.2C760.3 879.6 761.7 972.3 763.3 1005.3C765.0 1038.2 766.4 1057.9 768.1 1064.5C769.8 1071.1 771.2 1071.6 772.9 1043.0C774.5 1014.3 775.9 921.5 777.6 900.8C779.3 880.2 780.7 904.9 782.4 925.1C784.0 945.2 785.5 1015.8 787.1 1015.7C788.8 1015.7 790.2 947.1 791.9 924.6C793.5 902.2 795.0 903.8 796.6 887.6C798.3 871.4 799.7 835.5 801.4 832.2C803.0 828.8 804.5 843.4 806.1 868.5C807.8 893.7 809.2 974.8 810.9 975.8C812.5 976.9 814.0 897.6 815.6 874.4C817.3 851.2 818.7 845.9 820.4 843.1C822.1 840.3 823.5 850.1 825.1 858.4C826.8 866.6 828.2 877.0 829.9 890.4C831.6 903.7 833.0 923.3 834.7 934.6C836.3 945.9 837.7 967.4 839.4 954.9C841.1 942.5 842.5 868.8 844.2 863.4C845.8 858.1 847.3 918.1 848.9 924.2C850.6 930.3 852.0 879.5 853.7 898.3C855.3 917.0 856.8 1001.7 858.4 1031.5C860.1 1061.2 861.5 1070.1 863.2 1068.1C864.8 1066.1 866.3 1043.2 867.9 1020.0C869.6 996.8 871.0 949.8 872.7 935.5C874.3 921.2 875.8 920.1 877.4 938.3C879.1 956.5 880.5 1021.2 882.2 1039.4C883.9 1057.5 885.3 1077.6 886.9 1042.1C888.6 1006.6 890.0 830.9 891.7 836.5C893.4 842.0 894.8 1072.6 896.5 1073.7C898.1 1074.8 899.5 876.0 901.2 842.9C902.9 823.0 904.3 867.9 906.0 884.6C907.6 901.2 909.0 948.7 910.7 938.1C912.4 927.5 913.8 829.2 915.5 824.2C917.1 823.0 918.6 862.7 920.2 909.5C921.9 956.2 923.3 1093.0 925.0 1091.2C926.6 1078.9 928.1 858.7 929.7 839.4C931.4 823.0 932.8 980.3 934.5 981.4C936.1 982.4 937.6 864.4 939.2 845.5C940.9 826.6 942.3 836.5 944.0 873.3C945.7 910.1 947.1 1019.1 948.7 1055.7C950.4 1092.3 951.8 1076.7 953.5 1082.3C955.2 1087.8 956.6 1093.0 958.3 1087.4C959.9 1052.4 961.3 918.6 963.0 882.2C964.7 845.8 966.1 853.2 967.8 879.3C969.4 905.4 970.8 999.4 972.5 1031.4C974.2 1063.5 975.6 1069.1 977.3 1062.6C978.9 1056.0 980.4 1026.5 982.0 994.0C983.7 961.6 985.1 894.9 986.8 877.2C988.4 859.5 989.9 896.2 991.5 893.0C993.2 889.8 994.6 869.6 996.3 858.9C997.9 848.2 999.4 826.3 1001.0 831.6C1002.7 836.9 1004.1 883.0 1005.8 889.2C1007.5 895.5 1008.9 832.5 1010.5 867.4C1012.2 902.3 1013.6 1049.4 1015.3 1088.6C1017.0 1093.0 1018.4 1093.0 1020.1 1091.3C1021.7 1051.3 1023.1 889.1 1024.8 860.1C1026.5 831.2 1027.9 900.6 1029.6 925.9C1031.2 951.3 1032.6 981.6 1034.3 1004.8C1036.0 1027.9 1037.4 1058.7 1039.1 1058.4C1040.7 1058.1 1042.2 1013.2 1043.8 1003.2C1045.5 993.3 1046.9 1009.1 1048.6 1001.4C1050.2 993.7 1051.7 964.4 1053.3 959.2C1055.0 953.9 1056.4 957.7 1058.1 971.5C1059.7 985.4 1061.2 1021.0 1062.8 1038.4C1064.5 1055.8 1065.9 1070.9 1067.6 1070.8C1069.3 1070.8 1070.7 1040.3 1072.3 1038.2C1074.0 1036.0 1075.4 1053.5 1077.1 1058.4C1078.8 1063.2 1080.2 1079.5 1081.8 1065.9C1083.5 1052.4 1084.9 982.5 1086.6 981.1C1088.3 979.7 1089.7 1076.1 1091.4 1057.9C1093.0 1039.6 1094.4 896.6 1096.1 877.0C1097.8 857.4 1099.2 929.9 1100.9 945.9C1102.5 962.0 1104.0 973.2 1105.6 968.8C1107.3 964.3 1108.7 909.8 1110.4 920.4C1112.0 931.1 1113.5 1000.5 1115.1 1029.6C1116.8 1058.7 1118.2 1079.3 1119.9 1086.7C1121.5 1093.0 1123.0 1086.6 1124.6 1071.8C1126.3 1056.9 1127.7 1015.3 1129.4 1002.0C1131.1 988.6 1132.5 991.5 1134.1 995.5C1135.8 999.5 1137.2 1022.2 1138.9 1024.8C1140.6 1027.4 1142.0 1037.7 1143.6 1010.3C1145.3 982.8 1146.7 853.8 1148.4 867.9C1150.1 882.0 1151.5 1072.5 1153.2 1090.7C1154.8 1093.0 1156.2 989.4 1157.9 971.8C1159.6 954.1 1161.0 981.7 1162.7 989.6C1164.3 997.5 1165.8 1033.0 1167.4 1016.8C1169.1 1000.7 1170.5 894.6 1172.2 897.3C1173.8 900.0 1175.3 1000.1 1176.9 1032.4C1178.6 1064.6 1180.0 1078.5 1181.7 1081.6C1183.3 1084.7 1184.8 1093.0 1186.4 1049.9C1188.1 1005.7 1189.5 837.7 1191.2 828.8C1192.8 823.0 1194.3 958.9 1195.9 999.6C1197.6 1040.3 1199.0 1090.9 1200.7 1061.4C1202.4 1031.9 1203.8 855.8 1205.4 830.9C1207.1 823.0 1208.5 918.2 1210.2 918.8C1211.9 919.5 1213.3 823.0 1215.0 834.8C1216.6 849.6 1218.0 996.6 1219.7 1003.5C1221.4 1010.4 1222.8 860.6 1224.5 874.3C1226.1 888.0 1227.6 1054.8 1229.2 1081.8C1230.9 1093.0 1232.3 1064.5 1234.0 1028.9C1235.6 993.3 1237.1 891.6 1238.7 878.4C1240.4 865.3 1241.8 953.4 1243.5 953.7C1245.1 953.9 1246.6 873.7 1248.2 879.9C1249.9 886.0 1251.3 992.9 1253.0 988.8C1254.6 984.7 1256.1 841.8 1257.7 856.4C1259.4 870.9 1260.8 1060.1 1262.5 1072.1C1264.2 1084.0 1265.6 929.9 1267.2 924.7C1268.9 919.4 1271.2 1021.5 1272.0 1042.1" fill="none" stroke="#0030ff" stroke-width="2"/><line x1="326" y1="1093.5" x2="1273" y2="1093.5" stroke="#333" stroke-width="1"/><line x1="326.5" y1="1093" x2="326.5" y2="1098" stroke="#333"/><text x="326.5" y="1110" fill="#333" text-anchor="middle">16:05</text><text x="326.5" y="1122" fill="#333" text-anchor="middle">06-27</text><line x1="605.5" y1="1093" x2="605.5" y2="1098" stroke="#333"/><text x="605.5" y="1110" fill="#333" text-anchor="middle">16:06</text><text x="605.5" y="1122" fill="#333" text-anchor="middle">06-27</text><line x1="890.5" y1="1093" x2="890.5" y2="1098" stroke="#333"/><text x="890.5" y="1110" fill="#333" text-anchor="middle">16:07</text><text x="890.5" y="1122" fill="#333" text-anchor="middle">06-27</text><line x1="1175.5" y1="1093" x2="1175.5" y2="1098" stroke="#333"/><text x="1175.5" y="1110" fill="#333" text-anchor="middle">16:08</text><text x="1175.5" y="1122" fill="#333" text-anchor="middle">06-27</text><line x1="1272.5" y1="1093" x2="1272.5" y2="1098" stroke="#333"/><text x="1272.5" y="1110" fill="#333" text-anchor="middle">16:08</text><text x="1272.5" y="1122" fill="#333" text-anchor="middle">06-27</text><line x1="547" y1="773.5" x2="572" y2="773.5" stroke="#cf2a2a" stroke-width="1.5"/><circle cx="559.5" cy="773.5" r="5.5" fill="#fff" stroke="#cf2a2a" stroke-width="1.5"/><text x="577" y="778" fill="#333">CF100|PV222-5</text><line x1="675" y1="773.5" x2="700" y2="773.5" stroke="#a000ff" stroke-width="1.5"/><circle cx="687.5" cy="773.5" r="5.5" fill="#fff" stroke="#a000ff" stroke-width="1.5"/><text x="705" y="778" fill="#333">CF100|PV301-1</text><line x1="803" y1="773.5" x2="828" y2="773.5" stroke="#0030ff" stroke-width="1.5"/><circle cx="815.5" cy="773.5" r="5.5" fill="#fff" stroke="#0030ff" stroke-width="1.5"/><text x="833" y="778" fill="#333">CF100|PV301-2</text></svg>
<!-- right icon -->
<div class="abs" style="left:1324px;top:48px;width:2px;height:5px;background:#377cf5"></div>
<div class="abs" style="left:1306px;top:51px;width:20px;height:2px;background:#377cf5"></div>
<div class="abs" style="left:1306px;top:56px;width:20px;height:2px;background:#377cf5"></div>
<div class="abs" style="left:1324px;top:56px;width:2px;height:31px;background:#377cf5"></div>
<div class="abs" style="left:1306px;top:85px;width:20px;height:2px;background:#377cf5"></div>
<div class="abs" style="left:1308px;top:65px;width:14px;height:2px;background:#777"></div>
<div class="abs" style="left:1309.5px;top:68.5px;width:11px;height:5px;border:1.5px solid #222;border-radius:1.5px"></div>
<div class="abs" style="left:1308px;top:75px;width:14px;height:2px;background:#777"></div>
<div id="vscroll"><div id="thumb"></div><svg class="abs" style="left:4px;top:6px" width="9" height="6"><path d="M0.5 5.5L4.5 0.8L8.5 5.5Z" fill="#404040"/></svg></div>
<!-- header -->
<div id="hdr">
  <div id="title">报表模板编辑<span style="display:inline-block;width:18px">:</span><span style="font-size:17px;font-weight:bold;letter-spacing:0.15px">CF100-FS-DEMO2 - CIP</span>报告</div>
  <div class="hbtn" style="left:1758px;width:79px;background:#fff;color:#333;padding-left:8px;font-size:12px">内容配置<svg class="abs" style="left:61px;top:10px" width="10" height="8"><path d="M0.5 0.8L5 6.5L9.5 0.8" fill="none" stroke="#aaa" stroke-width="1"/></svg></div>
  <div class="hbtn" style="left:1841px;width:63px;background:#1890ff;color:#fff;border-radius:3px;font-size:12px">
    <svg class="abs" style="left:14px;top:9px" width="11" height="11" viewBox="0 0 11 11"><path d="M1.5 0.5H8L10.5 3V9.5Q10.5 10.5 9.5 10.5H1.5Q0.5 10.5 0.5 9.5V1.5Q0.5 0.5 1.5 0.5Z" fill="#fff"/><rect x="2.5" y="2" width="5" height="2" fill="#1890ff"/><circle cx="5.5" cy="7.3" r="1.3" fill="#1890ff"/></svg>
    <span class="abs" style="left:28px;top:0">保存</span></div>
  <div class="hbtn" style="left:1908px;width:62px;background:#1890ff;color:#fff;border-radius:3px;font-size:12px">
    <svg class="abs" style="left:14px;top:8px" width="10" height="12"><path d="M0.5 0.5L9.5 6L0.5 11.5Z" fill="#fff"/></svg>
    <span class="abs" style="left:26px;top:0">预览</span></div>
</div>
<!-- right panel -->
<div class="abs" style="left:1498px;top:64px;font-size:18px;line-height:24px;color:#333"><span style="font-size:16.5px">CIP</span>报告</div>
<div class="pbtn" style="left:1759px;width:88px"><svg class="abs" style="left:13px;top:9px" width="10" height="11"><path d="M6.5 0.5L1.5 6.5H4.8L3 10.5L8.5 4.5H5.2Z" fill="none" stroke="#fff" stroke-width="0.9" stroke-linejoin="round"/></svg><span class="abs" style="left:28px;top:0">快速配置</span></div>
<div class="pbtn" style="left:1853px;width:83px"><span class="abs" style="left:12px;top:0">添加组件 +</span></div>
<div class="abs" style="left:1942px;top:60px;width:28px;height:28px;border:1px solid #d9d9d9;border-radius:2px"><svg class="abs" style="left:7px;top:7px" width="13" height="13"><path d="M0.5 2.5H12.5M4.5 2.5V0.8H8.5V2.5M2 2.5L3 12.3H10L11 2.5" fill="none" stroke="#aaa" stroke-width="1"/></svg></div>
<div class="lbl" style="top:113px">模板名称:</div><div class="val" style="top:113px">CIP报告</div>
<div class="hr" style="top:158px"></div>
<div class="lbl" style="top:185px">批次规则:</div><div class="val" style="top:185px;color:#1890ff">CIP Batch</div>
<div class="hr" style="top:231px"></div>
<div class="lbl" style="top:258px">子阶段:</div>
<div class="val" style="top:256px;width:225px;line-height:23.3px;font-size:13.5px">预冲洗准备,预冲洗,预冲洗排放,碱洗准备(水）,碱洗准备(碱),碱洗循环,碱液排放,在碱洗和酸洗之间的冲洗准备,在碱洗和酸洗之间的冲洗,在碱洗和酸洗之间冲洗排放,酸洗准备(水）,酸洗准备(碱),酸洗循环,酸液排放,冲洗准备,冲洗,冲洗排放,空气吹扫</div>
<div class="hr" style="top:443px"></div>
<div class="lbl" style="top:470px">报表方向:</div>
<div class="abs" style="left:1659px;top:469px;width:200px;height:27px;border:1px solid #d9d9d9;font-size:12px;line-height:25px;padding-left:10px;color:#333">横<svg class="abs" style="right:8px;top:9px" width="11" height="7"><path d="M0.5 0.5L5.5 6L10.5 0.5" fill="none" stroke="#bbb" stroke-width="1"/></svg></div>
<div class="hr" style="top:520px"></div>
<div class="lbl" style="top:547px">边距设置:</div>
<div class="inp" style="left:1699px;top:546px">100</div>
<div class="inp" style="left:1659px;top:575px">0</div>
<div class="inp" style="left:1739px;top:575px">0</div>
<div class="inp" style="left:1699px;top:604px">100</div>
<div class="hr" style="top:649px"></div>
<div class="abs" style="left:1498px;top:687px;width:472px;height:62px;border:1px solid #e8e8e8"></div>
<div class="abs" style="left:1499px;top:725px;width:470px;height:1px;background:#e8e8e8"></div>
<div class="abs" style="left:1510px;top:697px;font-size:12px;line-height:18px;color:#333">属性编辑</div>
<!-- bottom bar -->
<div id="bot"></div>
<div class="sq" style="left:1650px"><svg class="abs" style="left:5px;top:4px" width="10" height="12"><path d="M5 11.5V1M0.8 5.2L5 1L9.2 5.2" fill="none" stroke="#222" stroke-width="1.3"/></svg></div>
<div class="sq" style="left:1680px"><svg class="abs" style="left:5px;top:4px" width="10" height="12"><path d="M5 0.5V11M0.8 6.8L5 11L9.2 6.8" fill="none" stroke="#222" stroke-width="1.3"/></svg></div>
<div class="sq" style="left:1714px"><div class="abs" style="left:5px;top:8.5px;width:10px;height:2.2px;background:#111"></div></div>
<div class="abs" style="left:1742px;top:1172px;width:199px;height:4px;background:#ebebeb;border-radius:2px"></div>
<div class="abs" style="left:1742px;top:1172px;width:129px;height:4px;background:#91d5ff;border-radius:2px"></div>
<div class="abs" style="left:1865px;top:1168px;width:13px;height:13px;border:2px solid #91d5ff;background:#fff;border-radius:50%"></div>
<div class="sq" style="left:1948px"><div class="abs" style="left:5px;top:8.5px;width:10px;height:2.2px;background:#111"></div><div class="abs" style="left:8.9px;top:4.5px;width:2.2px;height:10px;background:#111"></div></div>
<div id="mask"></div>
<div id="modal">
  <div class="abs" style="left:16px;top:12px;font-size:14px;line-height:20px;color:#333">添加</div>
  <svg class="abs" style="left:671px;top:15px" width="14" height="14"><path d="M2 2L12 12M12 2L2 12" stroke="#777" stroke-width="1.2"/></svg>
  <div class="abs" style="left:0;top:44px;width:700px;height:1px;background:#e8e8e8"></div>
  <div class="card" style="left:16px;top:61px">子阶段模板</div>
  <div class="card" style="left:187px;top:61px">折线图</div>
  <div class="card" style="left:358px;top:61px">变量表格</div>
  <div class="card" style="left:529px;top:61px">文本</div>
  <div class="card" style="left:16px;top:177px">行</div>
  <div class="card" style="left:187px;top:177px">图片</div>
  <div class="card" style="left:358px;top:177px">报警列表</div>
  <div class="card" style="left:529px;top:177px">审计追踪</div>
  <div class="card" style="left:16px;top:293px">表格</div>
  <div class="card" style="left:187px;top:293px">换页符</div>
  <div class="abs" style="left:0;top:409px;width:700px;height:1px;background:#e8e8e8"></div>
  <div class="abs" style="left:576px;top:418px;width:59px;height:28px;border:1px solid #d9d9d9;border-radius:2px;font-size:12px;line-height:28px;text-align:center;color:#333">Cancel</div>
  <div class="abs" style="left:643px;top:418px;width:41px;height:28px;background:#1890ff;border-radius:2px;font-size:13px;line-height:30px;text-align:center;color:#fff">OK</div>
</div>
</body></html>
